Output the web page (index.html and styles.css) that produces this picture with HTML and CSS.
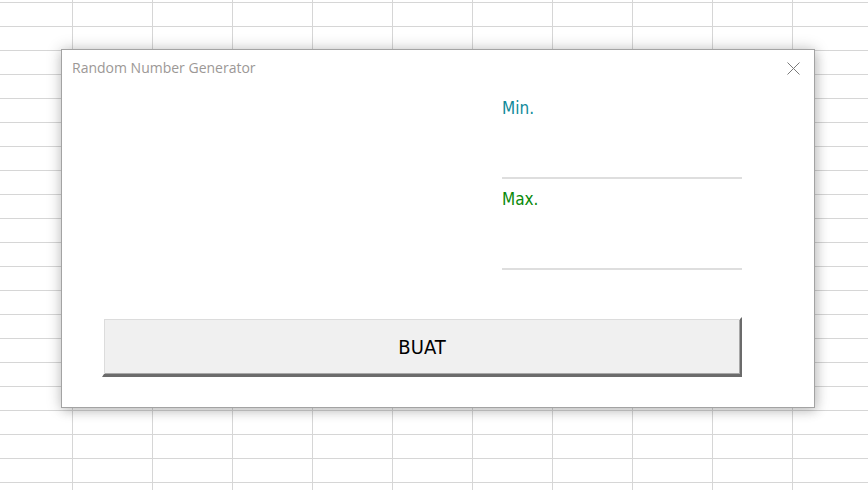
FILE: index.html
```html
<!DOCTYPE html>
<html lang="id">
<head>
<meta charset="utf-8">
<title>Random Number Generator</title>
<link rel="stylesheet" href="styles.css">
</head>
<body>
<div class="sheet">
  <div class="dialog">
    <div class="titlebar">
      <span class="title">Random Number Generator</span>
      <span class="close" aria-label="Close">
        <svg width="13" height="13" viewBox="0 0 13 13"><path d="M0.5 0.5 L12.5 12.5 M12.5 0.5 L0.5 12.5" stroke="#7a7a7a" stroke-width="1" fill="none"/></svg>
      </span>
    </div>
    <div class="fields">
      <div class="field">
        <div class="label label-min">Min.</div>
        <div class="input"></div>
      </div>
      <div class="field">
        <div class="label label-max">Max.</div>
        <div class="input"></div>
      </div>
    </div>
    <div class="actions">
      <button class="buat">BUAT</button>
    </div>
  </div>
</div>
</body>
</html>
```
FILE: styles.css
```css
html, body {
  margin: 0;
  padding: 0;
}
body {
  width: 868px;
  height: 490px;
  overflow: hidden;
  background-color: #ffffff;
  background-image:
    linear-gradient(to right, #d6d6d6 1px, transparent 1px),
    linear-gradient(to bottom, #d6d6d6 1px, transparent 1px);
  background-size: 80px 24px;
  background-position: 72px 2px;
}
.sheet {
  padding: 49px 0 0 61px;
}
.dialog {
  box-sizing: border-box;
  width: 754px;
  height: 359px;
  background: #ffffff;
  border: 1px solid #a3a3a3;
  box-shadow: 0 0 14px rgba(0, 0, 0, 0.22), 2px 4px 10px rgba(0, 0, 0, 0.12);
  display: flex;
  flex-direction: column;
}
.titlebar {
  display: flex;
  justify-content: space-between;
  align-items: flex-start;
  padding: 8px 14px 0 10px;
  height: 20px;
}
.title {
  font-family: "Open Sans", "Noto Sans", sans-serif;
  font-size: 14px;
  line-height: 20px;
  color: #9c9896;
}
.close {
  display: block;
  width: 13px;
  height: 13px;
  margin-top: 4px;
}
.close svg {
  display: block;
}
.fields {
  margin: 20px 0 0 440px;
  width: 240px;
  display: flex;
  flex-direction: column;
  gap: 10px;
}
.label {
  font-family: "DejaVu Sans Condensed", "DejaVu Sans", sans-serif;
  font-size: 17px;
  line-height: 20px;
  height: 20px;
}
.label-min {
  color: #108a9a;
}
.label-max {
  color: #0a8a0a;
}
.input {
  height: 59px;
  border-bottom: 2px solid #dedede;
}
.actions {
  margin: 47px 0 0 40px;
}
.buat {
  box-sizing: border-box;
  width: 640px;
  height: 60px;
  margin: 0;
  padding: 0;
  background: #f0f0f0;
  border-style: solid;
  border-width: 2px 2px 3px 2px;
  border-color: #ffffff #6b6b6b #6b6b6b #ffffff;
  box-shadow: inset 1px 1px 0 #dcdcdc, inset -1px -1px 0 #a8a8a8;
  font-family: "DejaVu Sans Condensed", "DejaVu Sans", sans-serif;
  font-size: 20px;
  color: #000000;
  line-height: 24px;
}
```
